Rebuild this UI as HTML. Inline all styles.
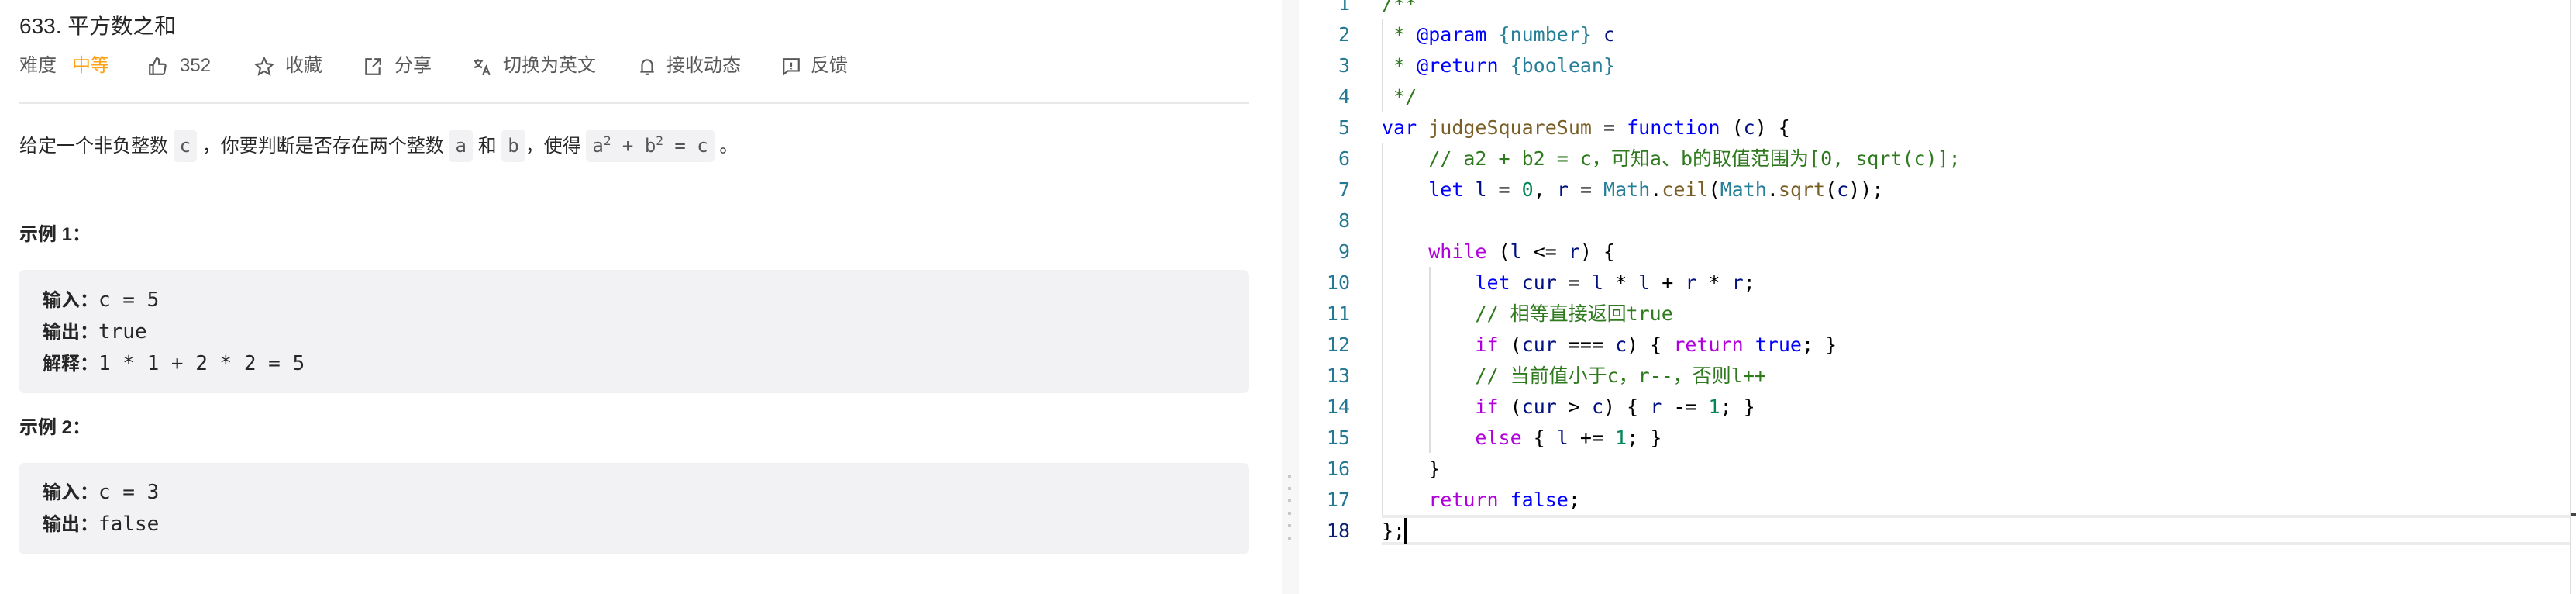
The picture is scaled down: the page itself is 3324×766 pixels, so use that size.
<!DOCTYPE html>
<html><head><meta charset="utf-8"><style>
*{margin:0;padding:0;box-sizing:border-box}
body{width:3324px;height:766px;background:#fff;position:relative;overflow:hidden;font-family:"Liberation Sans","Noto Sans CJK SC",sans-serif;color:#262626}
.a{position:absolute;white-space:nowrap}
.title{left:25px;top:14px;font-size:28px;line-height:40px;font-weight:normal;color:#262626}
.meta{top:69px;font-size:24px;line-height:32px;color:#595959}
.ic{position:absolute;top:73px}
.div{left:24px;top:131px;width:1588px;height:3px;background:#e8e8e8}
.desc{left:25px;top:162px;font-size:24px;line-height:40px;color:#262626}
code{font-family:"DejaVu Sans Mono",monospace;font-size:24px;background:#f2f2f4;border-radius:6px;padding:7px 8px;color:#555}
.h{left:25px;font-size:24px;font-weight:bold;line-height:34px}
.box{left:24px;width:1588px;background:#f2f2f4;border-radius:8px}
.pre{left:55px;font-family:"DejaVu Sans Mono","Noto Sans CJK SC",monospace;font-size:26px;line-height:40px;color:#262626}
.pre b{font-family:"Liberation Sans","Noto Sans CJK SC",sans-serif;font-size:24px}
.code{left:1783px;top:-15px;font-family:"DejaVu Sans Mono","Noto Sans CJK SC",monospace;font-size:25px;line-height:40px;color:#000;white-space:pre}
.ln{left:1690px;width:52px;top:-15px;text-align:right;font-family:"DejaVu Sans Mono",monospace;font-size:25px;line-height:40px;color:#237893;white-space:pre}
.c{color:#2f7a1f}.k{color:#0000ff}.p{color:#af00db}.f{color:#795e26}.t{color:#267f99}.v{color:#001080}.n{color:#098658}
</style></head><body>
<div class="a title">633. 平方数之和</div>
<div class="a meta" style="left:25px">难度</div>
<div class="a meta" style="left:93px;color:#ffa116">中等</div>
<svg class="ic" style="left:190px" width="26" height="26" viewBox="0 0 24 24" fill="none" stroke="#595959" stroke-width="2"><path d="M7 10v11H3V10h4zm0 0l4-8c2 0 3 1 3 3v4h6c1 0 2 1 1.8 2.3l-1.5 8c-.2 1-1 1.7-2 1.7H7"/></svg>
<div class="a meta" style="left:232px">352</div>
<svg class="ic" style="left:328px" width="26" height="26" viewBox="0 0 24 24" fill="none" stroke="#595959" stroke-width="2"><path d="M12 2l3 6.5 7 .8-5.2 4.8 1.5 7L12 17.5 5.7 21l1.5-7L2 9.3l7-.8z"/></svg>
<div class="a meta" style="left:368px">收藏</div>
<svg class="ic" style="left:468px" width="26" height="26" viewBox="0 0 24 24" fill="none" stroke="#595959" stroke-width="2"><path d="M11 3H4v18h16v-8M14 3h7v7M21 3l-9 9"/></svg>
<div class="a meta" style="left:509px">分享</div>
<svg class="ic" style="left:608px" width="28" height="26" viewBox="0 0 24 24" fill="none" stroke="#595959" stroke-width="2"><path d="M2 5h11M7 3v2M4 5c1 4 4 7 8 8M11 5c-1 4-4 7-8 8M13 22l4-10 4 10M14.5 18h5"/></svg>
<div class="a meta" style="left:649px">切换为英文</div>
<svg class="ic" style="left:822px" width="26" height="26" viewBox="0 0 24 24" fill="none" stroke="#595959" stroke-width="2"><path d="M6 18V10a6 6 0 0112 0v8M4 18h16M10 21h4"/></svg>
<div class="a meta" style="left:860px">接收动态</div>
<svg class="ic" style="left:1008px" width="26" height="26" viewBox="0 0 24 24" fill="none" stroke="#595959" stroke-width="2"><path d="M3 3h18v14H8l-5 4zM12 7v5M12 14v1"/></svg>
<div class="a meta" style="left:1046px">反馈</div>
<div class="a div"></div>
<div class="a desc">给定一个非负整数 <code>c</code> ，你要判断是否存在两个整数 <code>a</code> 和 <code>b</code>，使得 <code>a<sup style="font-size:16px">2</sup> + b<sup style="font-size:16px">2</sup> = c</code> 。</div>
<div class="a h" style="top:286px">示例 1：</div>
<div class="a box" style="top:348px;height:159px"></div>
<div class="a pre" style="top:367px"><b>输入：</b>c = 5<br><b>输出：</b>true<br><b>解释：</b>1 * 1 + 2 * 2 = 5</div>
<div class="a h" style="top:535px">示例 2：</div>
<div class="a box" style="top:597px;height:118px"></div>
<div class="a pre" style="top:615px"><b>输入：</b>c = 3<br><b>输出：</b>false</div>

<div class="a" style="left:1654px;top:0;width:22px;height:766px;background:#f7f7f8"></div>
<div class="a" style="left:1662px;top:612px;width:4px;height:86px;background:repeating-linear-gradient(#c8c8c8 0 4px,transparent 4px 16px)"></div>
<div class="a" style="left:1783px;top:664px;width:1534px;height:39px;border-top:4px solid #ececec;border-bottom:4px solid #ececec"></div>
<div class="a" style="left:3316px;top:0;width:2px;height:766px;background:#ddd"></div>
<div class="a" style="left:3317px;top:662px;width:7px;height:4px;background:#444"></div>
<div class="a" style="left:1783px;top:24px;width:2px;height:120px;background:#ddd"></div>
<div class="a" style="left:1783px;top:184px;width:2px;height:480px;background:#ddd"></div>
<div class="a" style="left:1844px;top:344px;width:2px;height:240px;background:#ddd"></div>
<div class="a" style="left:1812px;top:668px;width:3px;height:34px;background:#000"></div>
<div class="a ln">1
2
3
4
5
6
7
8
9
10
11
12
13
14
15
16
17
<span style="color:#0b216f">18</span></div>
<div class="a code"><span class="c">/**
 * <span class="k">@param</span> <span class="t">{number}</span> <span class="v">c</span>
 * <span class="k">@return</span> <span class="t">{boolean}</span>
 */</span>
<span class="k">var</span> <span class="f">judgeSquareSum</span> = <span class="k">function</span> (<span class="v">c</span>) {
    <span class="c">// a2 + b2 = c，可知a、b的取值范围为[0, sqrt(c)];</span>
    <span class="k">let</span> <span class="v">l</span> = <span class="n">0</span>, <span class="v">r</span> = <span class="t">Math</span>.<span class="f">ceil</span>(<span class="t">Math</span>.<span class="f">sqrt</span>(<span class="v">c</span>));

    <span class="p">while</span> (<span class="v">l</span> &lt;= <span class="v">r</span>) {
        <span class="k">let</span> <span class="v">cur</span> = <span class="v">l</span> * <span class="v">l</span> + <span class="v">r</span> * <span class="v">r</span>;
        <span class="c">// 相等直接返回true</span>
        <span class="p">if</span> (<span class="v">cur</span> === <span class="v">c</span>) { <span class="p">return</span> <span class="k">true</span>; }
        <span class="c">// 当前值小于c，r--，否则l++</span>
        <span class="p">if</span> (<span class="v">cur</span> &gt; <span class="v">c</span>) { <span class="v">r</span> -= <span class="n">1</span>; }
        <span class="p">else</span> { <span class="v">l</span> += <span class="n">1</span>; }
    }
    <span class="p">return</span> <span class="k">false</span>;
};</div>
</body></html>
